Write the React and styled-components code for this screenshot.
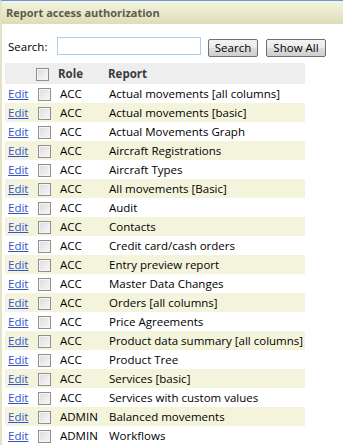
import React from "react";
import styled, { createGlobalStyle } from "styled-components";

const Global = createGlobalStyle`
  html, body { margin: 0; padding: 0; background: #fff; }
  body { font-family: "Segoe UI", "Open Sans", "Noto Sans", sans-serif; font-size: 11.5px; color: #000; }
`;

const Panel = styled.div`
  width: 343px;
  height: 445px;
  box-sizing: border-box;
  border-top: 1px solid #6a98d8;
  border-left: 2px solid #e4e4c4;
  overflow: hidden;
`;

const Header = styled.div`
  height: 23px;
  display: flex;
  align-items: center;
  padding-left: 4px;
  background: linear-gradient(#f4f4e0, #deddb6);
  color: #5b5b4d;
  font-weight: bold;
  font-size: 11px;
`;

const SearchBar = styled.div`
  display: flex;
  align-items: center;
  padding: 12px 0 0 6px;
  height: 20px;
`;

const Label = styled.span`
  width: 49px;
`;

const Input = styled.input`
  box-sizing: border-box;
  width: 144px;
  height: 18px;
  border: 1px solid #abcdf0;
  margin: 0 7px 0 0;
  padding: 0;
`;

const Button = styled.button`
  box-sizing: border-box;
  height: 18px;
  width: ${(p) => p.$w}px;
  margin: 3px ${(p) => p.$mr}px 0 0;
  padding: 0;
  font-family: inherit;
  font-size: 11.5px;
  color: #000;
  border: 1px solid #707070;
  border-radius: 2px;
  background: linear-gradient(#f2f2f2 0%, #ebebeb 50%, #dddddd 51%, #cfcfcf 100%);
  line-height: 14px;
`;

const Table = styled.table`
  margin: 7px 0 0 3px;
  width: 300px;
  border-collapse: collapse;
  table-layout: fixed;
`;

const HeadRow = styled.tr`
  background: #eeeeee;
  height: 21px;
  font-weight: bold;
  color: #3a3a3a;
`;

const Row = styled.tr`
  background: ${(p) => (p.$alt ? "#f4f4dc" : "#ffffff")};
  height: 19px;
`;

const Cell = styled.td`
  padding: 0 0 0 ${(p) => p.$pl || 0}px;
  white-space: nowrap;
  vertical-align: middle;
  line-height: 16px;
`;

const EditLink = styled.a`
  color: #3355cc;
  text-decoration: underline;
  cursor: pointer;
`;

const Check = styled.span`
  display: inline-block;
  width: 11px;
  height: 11px;
  border: 1px solid #8e8f8f;
  background: linear-gradient(135deg, #dcdcdc, #f8f8f8);
  box-shadow: inset 0 0 0 1px #f4f4f4;
  vertical-align: middle;
`;

const rows = [
  ["ACC", "Actual movements [all columns]"],
  ["ACC", "Actual movements [basic]"],
  ["ACC", "Actual Movements Graph"],
  ["ACC", "Aircraft Registrations"],
  ["ACC", "Aircraft Types"],
  ["ACC", "All movements [Basic]"],
  ["ACC", "Audit"],
  ["ACC", "Contacts"],
  ["ACC", "Credit card/cash orders"],
  ["ACC", "Entry preview report"],
  ["ACC", "Master Data Changes"],
  ["ACC", "Orders [all columns]"],
  ["ACC", "Price Agreements"],
  ["ACC", "Product data summary [all columns]"],
  ["ACC", "Product Tree"],
  ["ACC", "Services [basic]"],
  ["ACC", "Services with custom values"],
  ["ADMIN", "Balanced movements"],
  ["ADMIN", "Workflows"],
];

export default function App() {
  return (
    <>
      <Global />
      <Panel>
        <Header>Report access authorization</Header>
        <SearchBar>
          <Label>Search:</Label>
          <Input />
          <Button $w={50} $mr={8}>Search</Button>
          <Button $w={60} $mr={0}>Show All</Button>
        </SearchBar>
        <Table>
          <colgroup>
            <col style={{ width: 28 }} />
            <col style={{ width: 22 }} />
            <col style={{ width: 50 }} />
            <col />
          </colgroup>
          <thead>
            <HeadRow>
              <Cell />
              <Cell $pl={3}><Check /></Cell>
              <Cell $pl={3}>Role</Cell>
              <Cell $pl={3}>Report</Cell>
            </HeadRow>
          </thead>
          <tbody>
            {rows.map(([role, report], i) => (
              <Row key={i} $alt={i % 2 === 1}>
                <Cell $pl={3}><EditLink>Edit</EditLink></Cell>
                <Cell $pl={5}><Check /></Cell>
                <Cell $pl={5}>{role}</Cell>
                <Cell $pl={4}>{report}</Cell>
              </Row>
            ))}
          </tbody>
        </Table>
      </Panel>
    </>
  );
}
